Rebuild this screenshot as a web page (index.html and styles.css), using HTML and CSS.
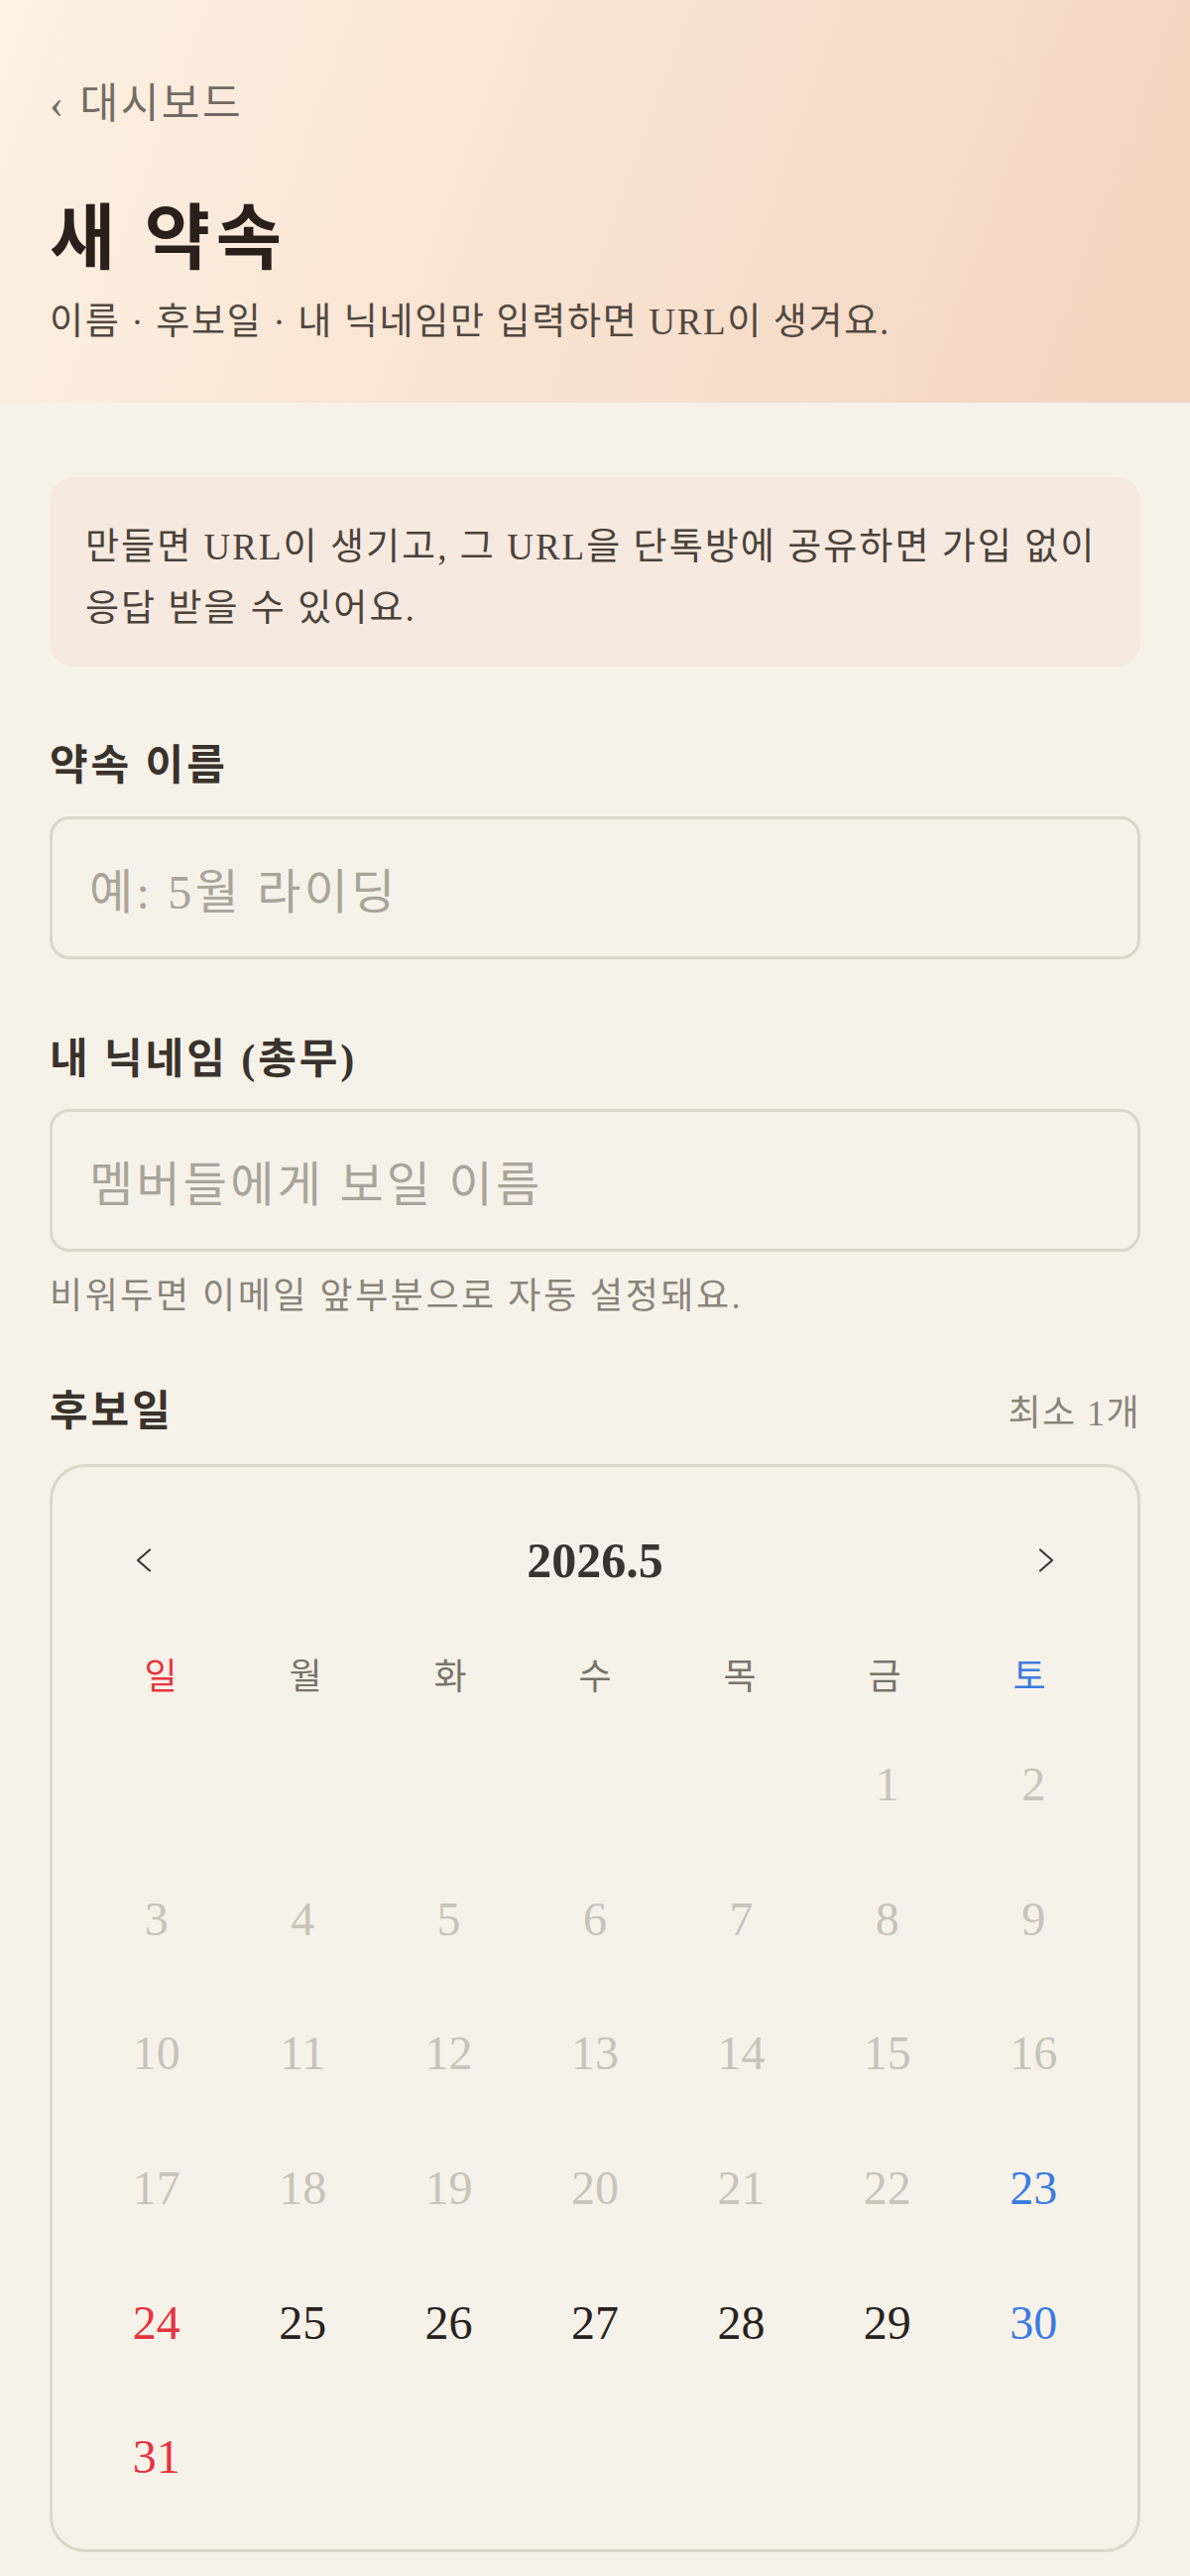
FILE: index.html
```html
<!DOCTYPE html>
<html lang="ko">
<head>
<meta charset="utf-8">
<title>새 약속</title>
<link rel="stylesheet" href="styles.css">
</head>
<body>
<header class="hero">
  <a class="back" href="#"><span class="back-arrow">‹</span>대시보드</a>
  <h1 class="title">새 약속</h1>
  <p class="subtitle">이름 · 후보일 · 내 닉네임만 입력하면 URL이 생겨요.</p>
</header>
<main class="content">
  <div class="notice">만들면 URL이 생기고, 그 URL을 단톡방에 공유하면 가입 없이 응답 받을 수 있어요.</div>

  <label class="field-label label-first" for="title">약속 이름</label>
  <input class="text-input input-first" id="title" type="text" placeholder="예: 5월 라이딩">

  <label class="field-label label-next" for="nick">내 닉네임 (총무)</label>
  <input class="text-input input-next" id="nick" type="text" placeholder="멤버들에게 보일 이름">
  <p class="hint">비워두면 이메일 앞부분으로 자동 설정돼요.</p>

  <div class="section-head">
    <span class="field-label">후보일</span>
    <span class="count">최소 1개</span>
  </div>

  <div class="calendar">
    <div class="cal-head">
      <button class="cal-nav" type="button" aria-label="이전 달">
        <svg width="16" height="24" viewBox="0 0 16 24"><polyline points="14,1.5 2,12 14,22.5" fill="none" stroke="#3e3833" stroke-width="2.2" stroke-linecap="round" stroke-linejoin="round"/></svg>
      </button>
      <div class="cal-month">2026.5</div>
      <button class="cal-nav" type="button" aria-label="다음 달">
        <svg width="16" height="24" viewBox="0 0 16 24"><polyline points="2,1.5 14,12 2,22.5" fill="none" stroke="#3e3833" stroke-width="2.2" stroke-linecap="round" stroke-linejoin="round"/></svg>
      </button>
    </div>
    <div class="cal-weekdays">
      <div class="wd sun">일</div>
      <div class="wd">월</div>
      <div class="wd">화</div>
      <div class="wd">수</div>
      <div class="wd">목</div>
      <div class="wd">금</div>
      <div class="wd sat">토</div>
    </div>
    <div class="cal-grid">
      <div class="day empty"></div>
      <div class="day empty"></div>
      <div class="day empty"></div>
      <div class="day empty"></div>
      <div class="day empty"></div>
      <div class="day past">1</div>
      <div class="day past">2</div>
      <div class="day past">3</div>
      <div class="day past">4</div>
      <div class="day past">5</div>
      <div class="day past">6</div>
      <div class="day past">7</div>
      <div class="day past">8</div>
      <div class="day past">9</div>
      <div class="day past">10</div>
      <div class="day past">11</div>
      <div class="day past">12</div>
      <div class="day past">13</div>
      <div class="day past">14</div>
      <div class="day past">15</div>
      <div class="day past">16</div>
      <div class="day past">17</div>
      <div class="day past">18</div>
      <div class="day past">19</div>
      <div class="day past">20</div>
      <div class="day past">21</div>
      <div class="day past">22</div>
      <div class="day sat">23</div>
      <div class="day sun">24</div>
      <div class="day">25</div>
      <div class="day">26</div>
      <div class="day">27</div>
      <div class="day">28</div>
      <div class="day">29</div>
      <div class="day sat">30</div>
      <div class="day sun">31</div>
    </div>
  </div>
</main>
</body>
</html>
```

FILE: styles.css
```css
html {
  background: #f7f2e9;
}

body {
  margin: 0;
  background: #f7f2e9;
  font-family: "Liberation Serif", "Noto Sans CJK KR", serif;
  color: #2f2823;
}

.hero {
  padding: 75px 50px 53px;
  background: linear-gradient(110deg, #fdf1e3 0%, #f8e2d0 50%, #f3d4be 100%);
}

.back {
  display: block;
  height: 60px;
  line-height: 60px;
  font-size: 42px;
  letter-spacing: 0.06em;
  color: #726b63;
  text-decoration: none;
}

.back-arrow {
  margin-right: 14px;
}

.title {
  margin: 61px 0 0;
  height: 90px;
  line-height: 90px;
  font-size: 72px;
  font-weight: 700;
  letter-spacing: 0.08em;
  color: #2a201b;
}

.subtitle {
  margin: 11px 0 0;
  line-height: 56px;
  font-size: 37px;
  letter-spacing: 0.045em;
  color: #51483f;
}

.content {
  padding: 75px 50px 0;
}

.notice {
  padding: 40px 36px 27px;
  border-radius: 24px;
  background: #f6e9df;
  font-size: 37px;
  line-height: 62px;
  letter-spacing: 0.055em;
  color: #4a423b;
}

.field-label {
  display: block;
  height: 60px;
  line-height: 60px;
  font-size: 42px;
  font-weight: 700;
  letter-spacing: 0.07em;
  color: #3a322c;
}

.label-first {
  margin-top: 70px;
}

.label-next {
  margin-top: 71px;
}

.text-input {
  display: block;
  box-sizing: border-box;
  width: 100%;
  height: 144px;
  padding: 8px 37px 0;
  border: 3px solid #dcd6cb;
  border-radius: 20px;
  background: transparent;
  font-family: "Liberation Serif", "Noto Sans CJK KR", serif;
  font-size: 48px;
  letter-spacing: 0.068em;
  color: #2f2823;
  outline: none;
}

.text-input::placeholder {
  color: #aaa49b;
  opacity: 1;
}

.input-first {
  margin-top: 21px;
}

.input-next {
  margin-top: 20px;
}

.hint {
  margin: 20px 0 0;
  line-height: 50px;
  font-size: 36px;
  letter-spacing: 0.07em;
  color: #8a847b;
}

.section-head {
  margin-top: 61px;
  display: flex;
  justify-content: space-between;
  align-items: baseline;
}

.count {
  font-size: 36px;
  letter-spacing: 0.04em;
  color: #8a847b;
}

.calendar {
  margin-top: 23px;
  padding: 40px 36px 25px;
  border: 3px solid #dcd6cb;
  border-radius: 36px;
}

.cal-head {
  height: 108px;
  display: flex;
  align-items: center;
  justify-content: space-between;
  margin-bottom: 34px;
}

.cal-nav {
  width: 112px;
  height: 108px;
  padding: 0;
  border: 0;
  background: transparent;
  display: flex;
  align-items: center;
  justify-content: center;
}

.cal-nav svg {
  display: block;
}

.cal-month {
  font-size: 50px;
  font-weight: 700;
  color: #3b342e;
  line-height: 1;
}

.cal-weekdays {
  display: grid;
  grid-template-columns: repeat(7, 1fr);
  margin-bottom: 10px;
}

.wd {
  text-align: center;
  line-height: 60px;
  font-size: 36px;
  color: #79736b;
}

.wd.sun {
  color: #e5383f;
}

.wd.sat {
  color: #3a7be0;
}

.cal-grid {
  display: grid;
  grid-template-columns: repeat(7, 1fr);
  grid-auto-rows: 135.7px;
  margin: 0 -5px;
}

.day {
  display: flex;
  align-items: center;
  justify-content: center;
  font-size: 48px;
  line-height: 1;
  color: #282320;
}

.day.past {
  color: #c9c3ba;
}

.day.sun {
  color: #e8333f;
}

.day.sat {
  color: #3a7be2;
}
```
